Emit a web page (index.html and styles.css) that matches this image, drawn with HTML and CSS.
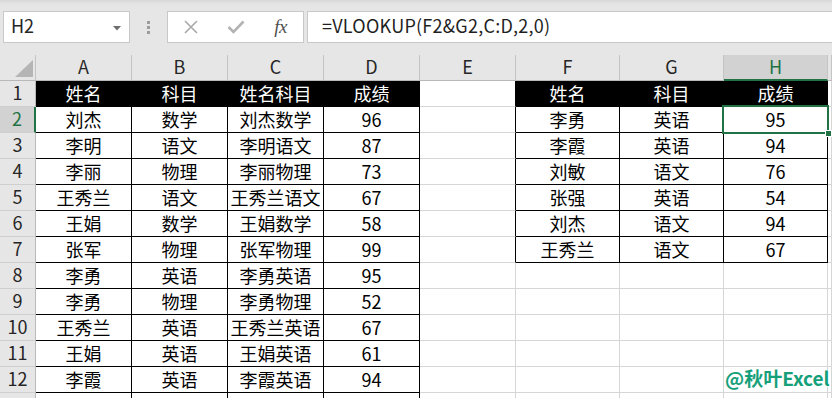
FILE: index.html
```html
<!DOCTYPE html>
<html lang="zh-CN">
<head>
<meta charset="utf-8">
<title>VLOOKUP</title>
<link rel="stylesheet" href="styles.css">
</head>
<body>
<div class="app">
  <div class="toolbar">
    <div class="namebox"><span>H2</span><svg class="caret" width="8" height="5" viewBox="0 0 8 5"><polygon points="0,0 8,0 4,4.5" fill="#6e6e6e"/></svg></div>
    <div class="grip"><i></i><i></i><i></i></div>
    <div class="fxbox">
      <span class="ico"><svg width="14" height="14" viewBox="0 0 14 14"><path d="M1 1 L13 13 M13 1 L1 13" stroke="#a9a9a9" stroke-width="1.6" fill="none"/></svg></span>
      <span class="ico"><svg width="18" height="14" viewBox="0 0 18 14"><path d="M1.5 7 L6.5 12 L16.5 1.5" stroke="#b3b3b3" stroke-width="2.6" fill="none"/></svg></span>
      <span class="ico fx">fx</span>
    </div>
    <div class="formula">=VLOOKUP(F2&amp;G2,C:D,2,0)</div>
  </div>

  <div class="sheet">
    <div class="c ch corner"><svg width="36" height="25" viewBox="0 0 36 25"><polygon points="33,5 33,22 15,22" fill="#b5b5b5"/></svg></div>
    <div class="c ch">A</div><div class="c ch">B</div><div class="c ch">C</div><div class="c ch">D</div><div class="c ch">E</div><div class="c ch">F</div><div class="c ch">G</div><div class="c ch selc">H</div><div class="c ch"></div>

    <div class="c rh">1</div>
    <div class="c k hd">姓名</div><div class="c k hd">科目</div><div class="c k hd">姓名科目</div><div class="c k hd">成绩</div>
    <div class="c eb"></div>
    <div class="c k hd">姓名</div><div class="c k hd">科目</div><div class="c k hd">成绩</div><div class="c"></div>

    <div class="c rh selr">2</div>
    <div class="c k">刘杰</div><div class="c k">数学</div><div class="c k">刘杰数学</div><div class="c k">96</div>
    <div class="c eb"></div>
    <div class="c k">李勇</div><div class="c k">英语</div><div class="c k active">95</div><div class="c"></div>

    <div class="c rh">3</div>
    <div class="c k">李明</div><div class="c k">语文</div><div class="c k">李明语文</div><div class="c k">87</div>
    <div class="c eb"></div>
    <div class="c k">李霞</div><div class="c k">英语</div><div class="c k">94</div><div class="c"></div>

    <div class="c rh">4</div>
    <div class="c k">李丽</div><div class="c k">物理</div><div class="c k">李丽物理</div><div class="c k">73</div>
    <div class="c eb"></div>
    <div class="c k">刘敏</div><div class="c k">语文</div><div class="c k">76</div><div class="c"></div>

    <div class="c rh">5</div>
    <div class="c k">王秀兰</div><div class="c k">语文</div><div class="c k">王秀兰语文</div><div class="c k">67</div>
    <div class="c eb"></div>
    <div class="c k">张强</div><div class="c k">英语</div><div class="c k">54</div><div class="c"></div>

    <div class="c rh">6</div>
    <div class="c k">王娟</div><div class="c k">数学</div><div class="c k">王娟数学</div><div class="c k">58</div>
    <div class="c eb"></div>
    <div class="c k">刘杰</div><div class="c k">语文</div><div class="c k">94</div><div class="c"></div>

    <div class="c rh">7</div>
    <div class="c k">张军</div><div class="c k">物理</div><div class="c k">张军物理</div><div class="c k">99</div>
    <div class="c eb"></div>
    <div class="c k">王秀兰</div><div class="c k">语文</div><div class="c k">67</div><div class="c"></div>

    <div class="c rh">8</div>
    <div class="c k">李勇</div><div class="c k">英语</div><div class="c k">李勇英语</div><div class="c k">95</div>
    <div class="c"></div><div class="c"></div><div class="c"></div><div class="c"></div><div class="c"></div>

    <div class="c rh">9</div>
    <div class="c k">李勇</div><div class="c k">物理</div><div class="c k">李勇物理</div><div class="c k">52</div>
    <div class="c"></div><div class="c"></div><div class="c"></div><div class="c"></div><div class="c"></div>

    <div class="c rh">10</div>
    <div class="c k">王秀兰</div><div class="c k">英语</div><div class="c k">王秀兰英语</div><div class="c k">67</div>
    <div class="c"></div><div class="c"></div><div class="c"></div><div class="c"></div><div class="c"></div>

    <div class="c rh">11</div>
    <div class="c k">王娟</div><div class="c k">英语</div><div class="c k">王娟英语</div><div class="c k">61</div>
    <div class="c"></div><div class="c"></div><div class="c"></div><div class="c"></div><div class="c"></div>

    <div class="c rh">12</div>
    <div class="c k">李霞</div><div class="c k">英语</div><div class="c k">李霞英语</div><div class="c k">94</div>
    <div class="c"></div><div class="c"></div><div class="c"></div><div class="c"></div><div class="c"></div>

    <div class="c rh"></div>
    <div class="c k"></div><div class="c k"></div><div class="c k"></div><div class="c k"></div>
    <div class="c"></div><div class="c"></div><div class="c"></div><div class="c"></div><div class="c"></div>
  </div>

  <div class="watermark">@秋叶Excel</div>
</div>
</body>
</html>
```

FILE: styles.css
```css
html, body {
  margin: 0;
  padding: 0;
  background: #ffffff;
  overflow: hidden;
}

body {
  font-family: "Noto Sans CJK SC", "Noto Sans", sans-serif;
  color: #000;
}

.app {
  position: relative;
  width: 832px;
  height: 398px;
  overflow: hidden;
  background: #fff;
}

/* ---------- formula bar ---------- */
.toolbar {
  height: 55px;
  box-sizing: border-box;
  padding-top: 11px;
  display: flex;
  align-items: flex-start;
  background: linear-gradient(#d8d8d8 0, #e4e4e4 4px, #e6e6e6 8px);
}

.namebox {
  margin-left: 3px;
  width: 127px;
  height: 32px;
  box-sizing: border-box;
  background: #fff;
  border: 1px solid #c8c8c8;
  display: flex;
  align-items: flex-start;
  justify-content: space-between;
  padding: 0 8px 0 7px;
  font-size: 18px;
  line-height: 26px;
  color: #262626;
}

.caret {
  margin-top: 14px;
}

.grip {
  width: 37px;
  height: 32px;
  box-sizing: border-box;
  padding-top: 10px;
  display: flex;
  flex-direction: column;
  align-items: center;
  gap: 2px;
}

.grip i {
  display: block;
  width: 3px;
  height: 3px;
  background: #9c9c9c;
}

.fxbox {
  width: 137px;
  height: 32px;
  box-sizing: border-box;
  background: #fff;
  border: 1px solid #c8c8c8;
  display: grid;
  grid-template-columns: 45px 45px 45px;
  align-items: center;
  justify-items: center;
}

.ico {
  display: flex;
  align-items: center;
  justify-content: center;
  height: 30px;
}

.fx {
  font-family: "Liberation Serif", "DejaVu Serif", serif;
  font-style: italic;
  font-size: 19px;
  color: #505050;
  letter-spacing: -0.5px;
}

.formula {
  flex: 1;
  margin-left: 3px;
  height: 32px;
  box-sizing: border-box;
  background: #fff;
  border: 1px solid #c8c8c8;
  border-right: none;
  padding-left: 14px;
  font-size: 18px;
  line-height: 26px;
  letter-spacing: 0.25px;
  color: #1f1f1f;
  white-space: nowrap;
}

/* ---------- sheet grid ---------- */
.sheet {
  display: grid;
  grid-template-columns: 36px repeat(5, 96px) repeat(3, 104px) 1fr;
  grid-template-rows: 26px;
  grid-auto-rows: 26px;
}

.c {
  box-sizing: border-box;
  border-right: 1px solid #d6d6d6;
  border-bottom: 1px solid #d6d6d6;
  display: flex;
  justify-content: center;
  align-items: flex-start;
  font-size: 18px;
  line-height: 25px;
  white-space: nowrap;
  overflow: visible;
  background: #fff;
}

.ch {
  background: #e6e6e6;
  border-right-color: #c4c4c4;
  border-bottom-color: #b9b9b9;
  line-height: 22px;
  color: #262626;
}

.corner {
  display: block;
}

.corner svg {
  display: block;
}

.rh {
  background: #e6e6e6;
  border-right-color: #b9b9b9;
  border-bottom-color: #cfcfcf;
  line-height: 23px;
  color: #262626;
}

.selc {
  background: #d2d2d2;
  color: #217346;
  border-bottom: 2px solid #217346;
}

.selr {
  background: #d2d2d2;
  color: #217346;
  border-right: 2px solid #217346;
}

.k {
  border-right-color: #000;
  border-bottom-color: #000;
}

.hd {
  background: #000;
  color: #fff;
}

.eb {
  border-right-color: #000;
}

.active {
  position: relative;
}

.active::before {
  content: "";
  position: absolute;
  top: -2px;
  left: -2px;
  right: -2px;
  bottom: -2px;
  border: 2px solid #217346;
  z-index: 2;
}

.active::after {
  content: "";
  position: absolute;
  right: -4px;
  bottom: -4px;
  width: 5px;
  height: 5px;
  background: #217346;
  box-shadow: 0 0 0 1px #fff;
  z-index: 3;
}

/* ---------- watermark ---------- */
.watermark {
  position: absolute;
  left: 725px;
  top: 365px;
  font-family: "Noto Sans CJK SC", "Noto Sans", sans-serif;
  font-weight: bold;
  font-size: 19px;
  line-height: 26px;
  color: #16a07a;
  text-shadow: 0 0 2px #fff, 0 0 2px #fff;
  z-index: 5;
}
```
